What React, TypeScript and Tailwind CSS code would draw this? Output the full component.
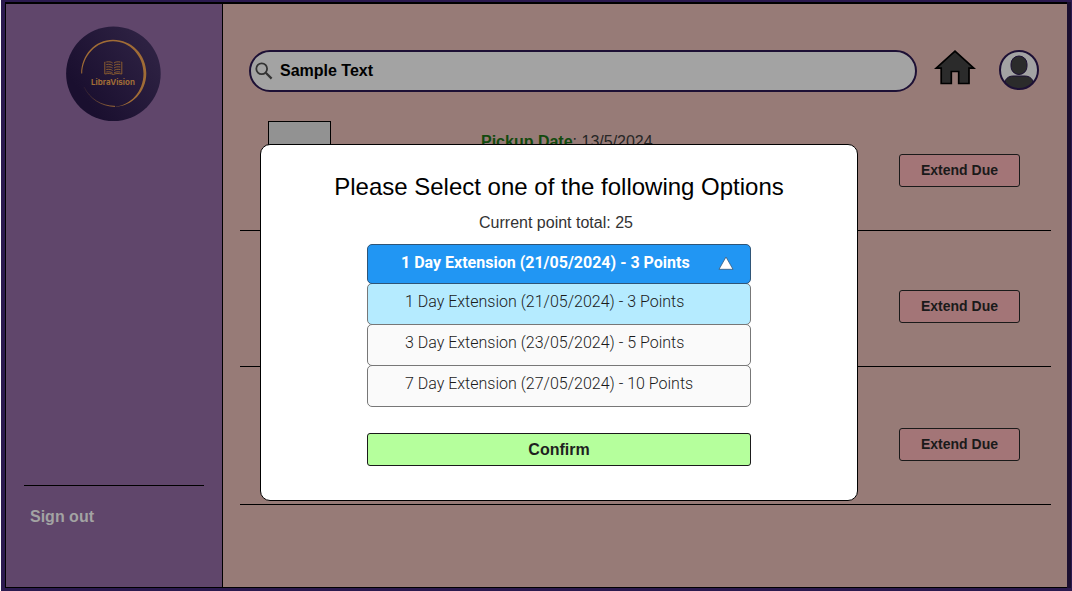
import { useState } from "react";

const options = [
  "1 Day Extension (21/05/2024) - 3 Points",
  "3 Day Extension (23/05/2024) - 5 Points",
  "7 Day Extension (27/05/2024) - 10 Points",
];

const loans: { id: number; pickup?: string; height: string }[] = [
  { id: 1, pickup: "13/5/2024", height: "h-[136px]" },
  { id: 2, height: "h-[136px]" },
  { id: 3, height: "h-[138px]" },
];

function Logo() {
  return (
    <svg viewBox="0 0 96 96" className="size-24" role="img" aria-label="LibraVision">
      <defs>
        <linearGradient id="disc" x1="0.15" y1="0.7" x2="0.85" y2="0.2">
          <stop offset="0" stopColor="#1a0f2f" />
          <stop offset="1" stopColor="#2d2142" />
        </linearGradient>
        <linearGradient id="ring" x1="0" y1="0" x2="1" y2="0">
          <stop offset="0" stopColor="#a06c36" stopOpacity="0.1" />
          <stop offset="1" stopColor="#a06c36" />
        </linearGradient>
      </defs>
      <circle cx="47.400" cy="47.700" r="47.300" fill="url(#disc)" />
      <path
        d="M15.200 47.500 C15.200 29 29 13.700 47 13.700 C66 13.700 80.300 29 80.300 47.300 C80.300 66 66 80.700 48.500 80.700 C65 79.600 77.500 65 77.500 47.500 C77.500 30 64 15.200 47 15.200 C30.500 15.200 16.500 29.500 16.200 47.500 Z"
        fill="#a06c36"
      />
      <path d="M18 61 C24 73 35 80 49 80.400" fill="none" stroke="url(#ring)" strokeWidth="1" />
      <g fill="none" stroke="#94632f" strokeWidth="0.9" transform="translate(-0.700 -1)">
        <path d="M40 37 H39.500 V49 C43 48.200 46 48.500 48 49.500 C50 48.500 53 48.200 56.500 49 V37 H56" />
        <path d="M41 37 C44 36.500 46 37 47.300 38 M41 39.500 C44 39 46 39.500 47.300 40.500 M41 42 C44 41.500 46 42 47.300 43 M41 44.500 C44 44 46 44.500 47.300 45.500 M41 47 C44 46.500 46 47 47.300 48" />
        <path d="M55 37 C52 36.500 50 37 48.700 38 M55 39.500 C52 39 50 39.500 48.700 40.500 M55 42 C52 41.500 50 42 48.700 43 M55 44.500 C52 44 50 44.500 48.700 45.500 M55 47 C52 46.500 50 47 48.700 48" />
      </g>
      <text x="47" y="59" textAnchor="middle" className="fill-[#a06c36] font-['Inter',sans-serif] text-[8px] font-bold">
        LibraVision
      </text>
    </svg>
  );
}

function SearchIcon() {
  return (
    <svg viewBox="0 0 18 18" className="size-[18px] shrink-0" aria-hidden="true">
      <circle cx="6.700" cy="6.700" r="5.400" fill="none" stroke="#333333" strokeWidth="1.800" />
      <path d="M10.800 10.800 L16.600 16.600" stroke="#333333" strokeWidth="2.200" />
    </svg>
  );
}

function HomeIcon() {
  return (
    <svg viewBox="0 0 42 35" className="h-[35px] w-[42px]" aria-hidden="true">
      <path
        d="M21 1.200 L39.800 18.200 H35 V33.500 H24.700 V21.500 H17.300 V33.500 H7.200 V18.200 H2.200 Z"
        fill="#2b2b2b"
        stroke="#000000"
        strokeWidth="1.700"
      />
    </svg>
  );
}

function ProfileIcon() {
  return (
    <svg viewBox="0 0 40 40" className="size-10" aria-hidden="true">
      <defs>
        <clipPath id="profile-clip">
          <circle cx="20" cy="20" r="19" />
        </clipPath>
      </defs>
      <circle cx="20" cy="20" r="19" fill="#a3a3a3" />
      <g clipPath="url(#profile-clip)" fill="#2b2b2b" stroke="#1d1035" strokeWidth="1">
        <rect x="12" y="6" width="16" height="18.500" rx="8" ry="8" />
        <path d="M6 36 V31 C8 27 11 26 15 26 H25 C29 26 32 27 34 31 V36 L20 40 Z" />
      </g>
      <circle cx="20" cy="20" r="19" fill="none" stroke="#1d1035" strokeWidth="2" />
    </svg>
  );
}

function ExtensionDialog() {
  const [selected, setSelected] = useState(options[0]);
  return (
    <div className="absolute inset-0 flex items-center justify-center pt-[54px] pl-[46px]">
      <div
        role="dialog"
        aria-modal="true"
        aria-labelledby="dialog-title"
        className="flex h-[357px] w-full max-w-[598px] flex-col items-center rounded-[10px] border border-black bg-white px-6 pt-7"
      >
        <h1 id="dialog-title" className="text-[24px] leading-7 text-black">
          Please Select one of the following Options
        </h1>
        <label htmlFor="extension" className="mt-3 pr-1.5 text-[16px] leading-5 text-[#333333]">
          Current point total: 25
        </label>
        <div className="mt-[11px] w-full max-w-[384px] font-['Roboto',sans-serif] text-[16px]">
          <div className="relative">
            <select
              id="extension"
              value={selected}
              onChange={(e) => setSelected(e.target.value)}
              className="block h-[40px] w-full appearance-none rounded-[5px] border border-[#2f5577] bg-[#2196f3] pb-0.5 pl-[33px] font-bold text-white"
            >
              {options.map((o) => (
                <option key={o}>{o}</option>
              ))}
            </select>
            <svg viewBox="0 0 16 14" className="pointer-events-none absolute top-3 right-[17px] h-[14px] w-4" aria-hidden="true">
              <path d="M8 1 L15 13.300 H1 Z" fill="#ffffff" stroke="#36597a" strokeWidth="0.800" />
            </svg>
          </div>
          <ul>
            {options.map((o, i) => (
              <li key={o} className="-mt-px">
                <button
                  type="button"
                  onClick={() => setSelected(o)}
                  className={
                    "block h-[42px] w-full rounded-[5px] border border-[#777777] pb-1 pl-[37px] text-left font-light text-[#1a1a1a] " +
                    (i === 0 ? "bg-[#b5ebff]" : "bg-[#fafafa]")
                  }
                >
                  {o}
                </button>
              </li>
            ))}
          </ul>
        </div>
        <button
          type="button"
          className="mt-[26px] h-[33px] w-full max-w-[384px] rounded-[3px] border border-[#1a1a1a] bg-[#b5ff9c] text-[16px] font-bold text-[#1f1f1f]"
        >
          Confirm
        </button>
      </div>
    </div>
  );
}

export default function App() {
  return (
    <div className="relative flex h-screen bg-white pl-px font-['Liberation_Sans',Arial,sans-serif]">
      <div className="flex flex-1 border-t-2 border-r border-b-[3px] border-l-4 border-[#2b1a4f] bg-[#1b0f30]">
        <div className="mr-1 flex flex-1 border-t border-b border-l border-black">
          <aside className="flex w-[217px] shrink-0 flex-col border-t border-r border-black bg-[#60466b]">
            <div className="mt-[22px] flex justify-center">
              <Logo />
            </div>
            <div className="mx-[18px] mt-auto mb-[60px] border-t border-black px-1.5 pt-[21px]">
              <a href="#signout" className="block text-[16px] leading-5 font-bold text-[#a3a3a3]">
                Sign out
              </a>
            </div>
          </aside>
          <main className="flex flex-1 flex-col border-t border-black bg-[#977b77] pr-4 pl-[17px]">
            <header className="mt-[46px] flex h-[42px] items-center pr-3 pl-[9px]">
              <label className="flex h-full flex-1 items-center gap-[7px] rounded-full border-2 border-[#1d1035] bg-[#a3a3a3] pl-1">
                <SearchIcon />
                <input
                  type="text"
                  aria-label="Search"
                  defaultValue="Sample Text"
                  className="min-w-0 flex-1 bg-transparent text-[16px] font-bold text-black outline-none"
                />
              </label>
              <a href="#home" aria-label="Home" className="mr-[23px] mb-2 ml-[17px]">
                <HomeIcon />
              </a>
              <button type="button" aria-label="Profile" className="mb-0.5">
                <ProfileIcon />
              </button>
            </header>
            <ul className="mt-[3px]">
              {loans.map((loan) => (
                <li
                  key={loan.id}
                  className={"flex items-end justify-between border-b border-black pr-[31px] pb-[43px] pl-7 " + loan.height}
                >
                  {loan.pickup ? (
                    <div className="flex h-[66px] items-start gap-[150px]">
                      <div className="h-[66px] w-[63px] border border-black bg-[#929292]" />
                      <p className="pt-[11px] text-[16px] leading-5 text-[#262626]">
                        <span className="font-bold text-[#124a0e]">Pickup Date</span>: {loan.pickup}
                      </p>
                    </div>
                  ) : (
                    <span />
                  )}
                  <button
                    type="button"
                    className="h-[33px] w-[121px] rounded-[3px] border border-[#1a1a1a] bg-[#a37577] text-[14px] font-bold text-[#1a1a1a]"
                  >
                    Extend Due
                  </button>
                </li>
              ))}
            </ul>
          </main>
        </div>
      </div>
      <ExtensionDialog />
    </div>
  );
}
